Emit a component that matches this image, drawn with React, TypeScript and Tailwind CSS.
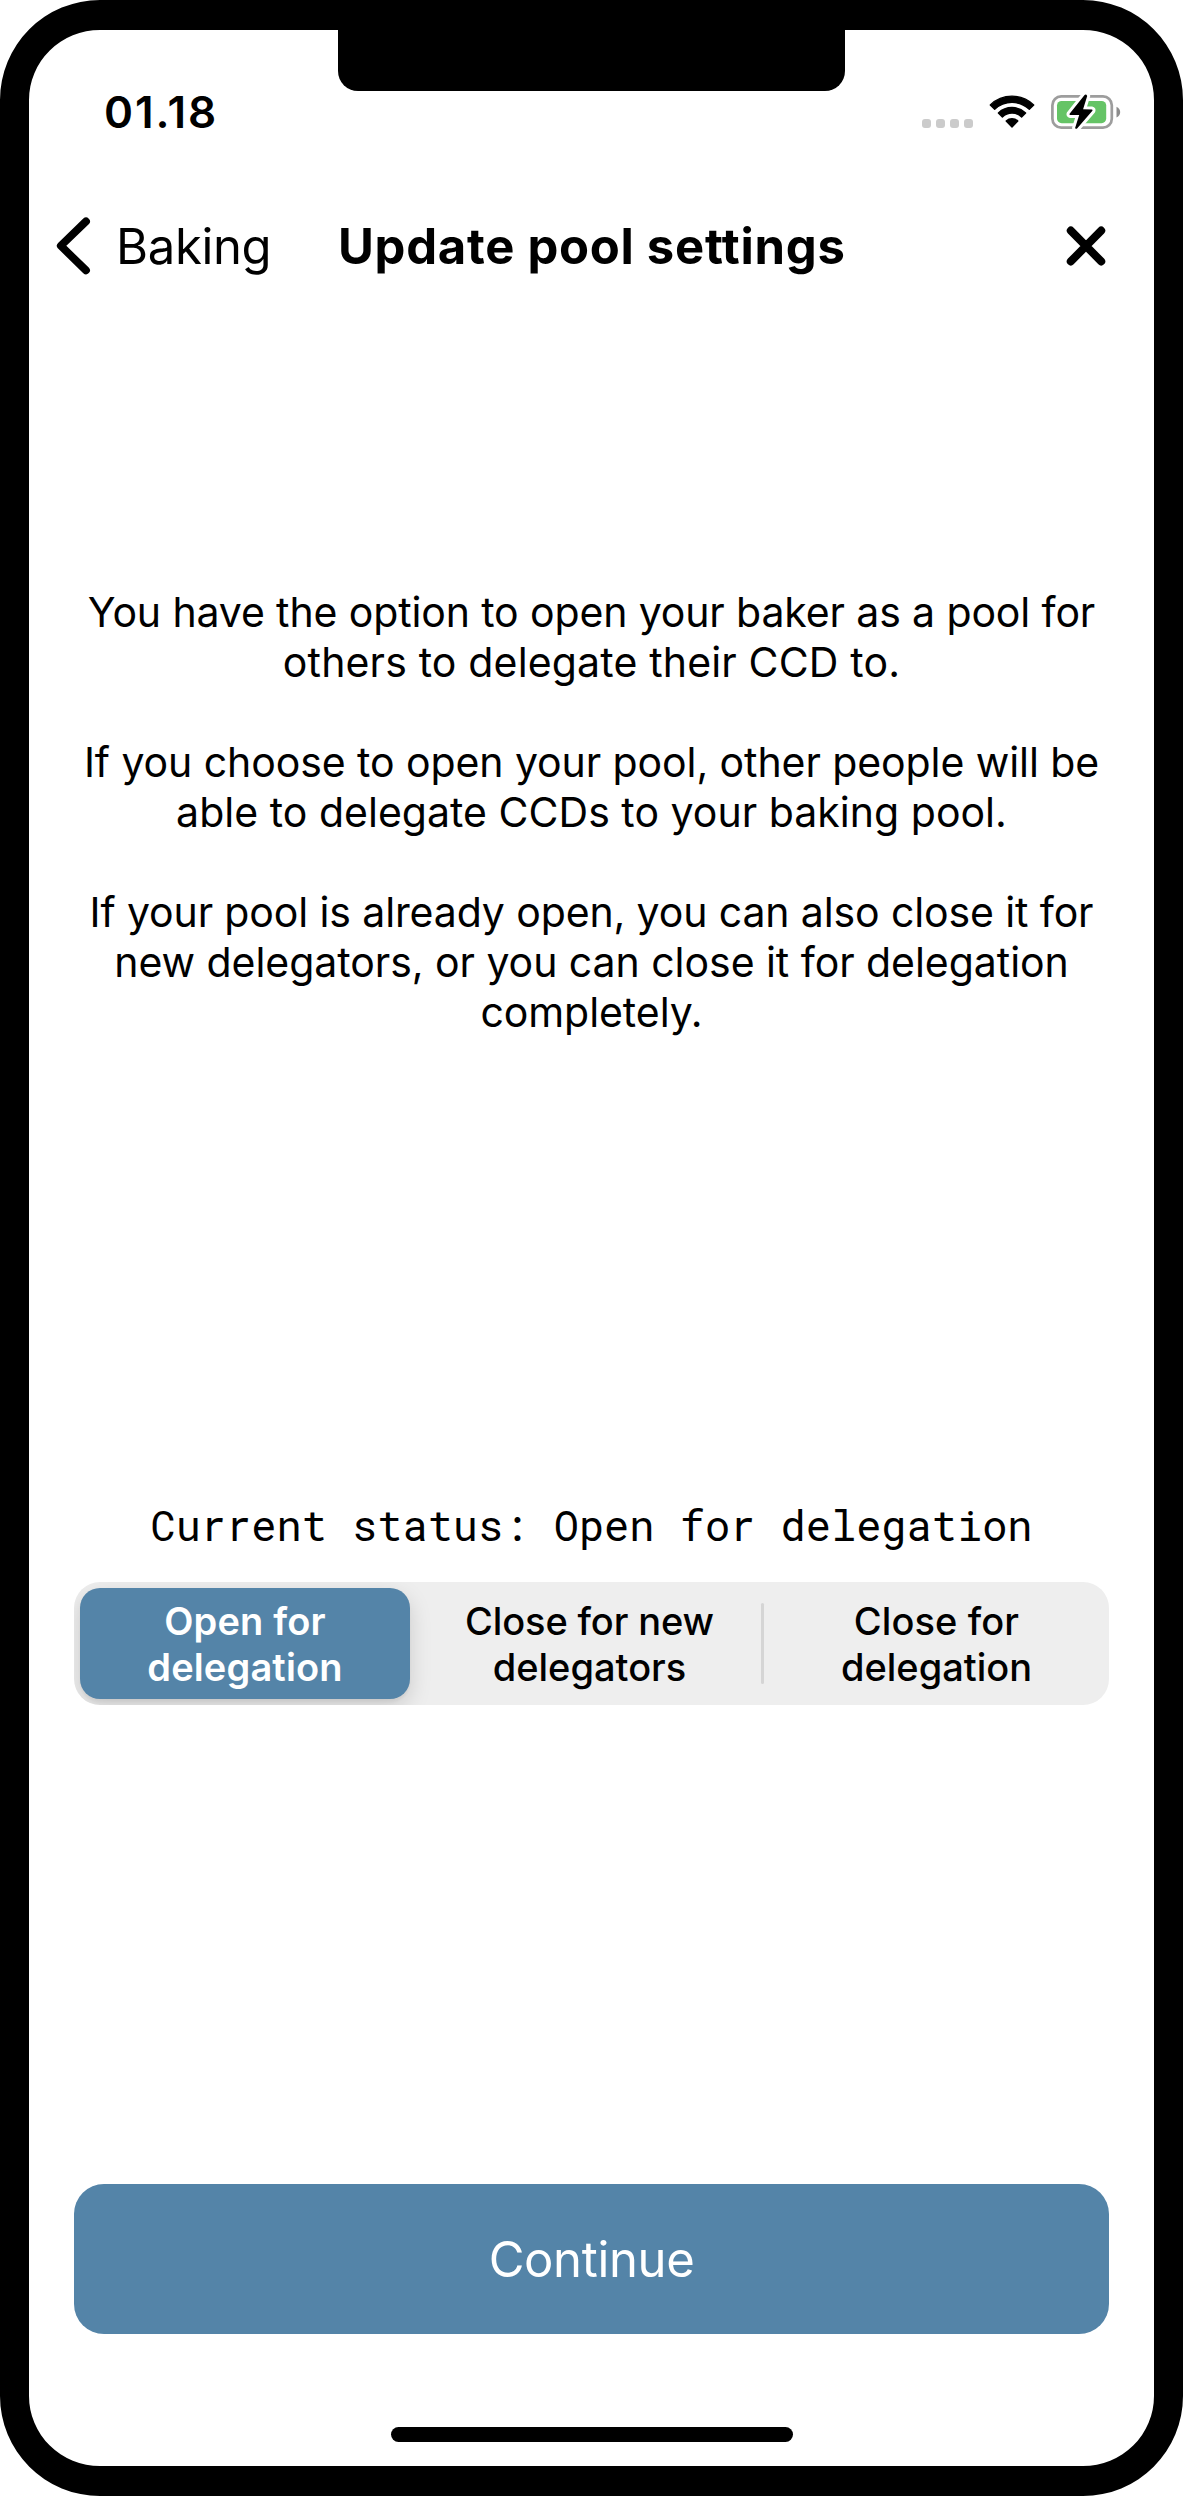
function SignalDots() {
  return (
    <div className="mt-[23px] flex gap-[5px]">
      {[0, 1, 2, 3].map((i) => (
        <span key={i} className="size-[9px] rounded-[3px] bg-[#cbcbcb]" />
      ))}
    </div>
  );
}

function WifiIcon() {
  return (
    <svg width="46" height="34" viewBox="0 0 46 34" className="ml-[16px]">
      <g stroke="#000" strokeWidth="1.4" strokeLinejoin="round">
        <path d="M1.3 9.9A31.3 31.3 0 0 1 44.7 9.9L40.3 14.3A25.2 25.2 0 0 0 5.7 14.3Z" />
        <path d="M9.4 17.9A20 20 0 0 1 36.6 17.9L32.6 21.9A13.8 13.8 0 0 0 13.4 21.9Z" />
        <path d="M17.2 25.9A8.7 8.7 0 0 1 28.8 25.9L23 31.9Z" />
      </g>
    </svg>
  );
}

function BatteryIcon() {
  const bolt =
    "M33.6 1.2L18.6 20.1Q18.2 21.1 19.2 21.2L28.2 21.3L24.1 34.2Q25 35.8 26.3 34.6L41.4 17Q41.8 15.8 40.8 15.7L32.1 15.5L36.2 2.2Q35.2 .2 33.6 1.2Z";
  return (
    <svg width="70" height="38" viewBox="0 0 70 38" className="mt-[2px] ml-[16px]">
      <rect x="1.4" y="2.4" width="59.4" height="31.2" rx="8.8" fill="none" stroke="#9d9d9d" strokeWidth="2.7" />
      <path d="M65.5 12.7C70.4 14.6 70.4 21.6 65.5 23.5Z" fill="#8c8c8c" />
      <rect x="6" y="7" width="49.2" height="22.2" rx="4.6" fill="#65c466" />
      <path d={bolt} transform="translate(0 -0.3)" fill="#fff" stroke="#fff" strokeWidth="6" strokeLinejoin="round" />
      <path d={bolt} transform="translate(0 -0.3)" />
    </svg>
  );
}

function StatusBar() {
  return (
    <div className="mt-[52px] flex h-[60px] items-center justify-between pr-[33px] pl-[75px]">
      <span className="text-[44px] leading-[60px] font-semibold tracking-[1.9px]">01.18</span>
      <div className="flex items-center">
        <SignalDots />
        <WifiIcon />
        <BatteryIcon />
      </div>
    </div>
  );
}

function NavBar() {
  return (
    <div className="mt-[64px] flex h-[80px] items-center">
      <svg width="36" height="60" viewBox="0 0 36 60" className="ml-[27px]">
        <path d="M30 5.4L4.8 29.8L30 54.4" fill="none" stroke="#000" strokeWidth="7.8" strokeLinecap="round" strokeLinejoin="round" />
      </svg>
      <span className="ml-[24px] w-[222px] pt-[2px] text-[49px] leading-[80px] tracking-[-0.35px]">Baking</span>
      <h1 className="pt-[2px] text-[49px] leading-[80px] font-bold tracking-[0.72px] whitespace-nowrap">Update pool settings</h1>
      <svg width="40" height="40" viewBox="0 0 40 40" className="mr-[48px] ml-auto">
        <path d="M4.8 4.6L35.2 35.4M35.2 4.6L4.8 35.4" fill="none" stroke="#000" strokeWidth="8" strokeLinecap="round" />
      </svg>
    </div>
  );
}

function Intro() {
  return (
    <div className="mt-[301px] flex flex-col gap-[50px] text-center text-[41px] leading-[50px] whitespace-nowrap">
      <p>
        <span className="block tracking-[-0.125px]">You have the option to open your baker as a pool for</span>
        <span className="block tracking-[0.16px]">others to delegate their CCD to.</span>
      </p>
      <p>
        <span className="block tracking-[-0.08px]">If you choose to open your pool, other people will be</span>
        <span className="block tracking-[0.025px]">able to delegate CCDs to your baking pool.</span>
      </p>
      <p>
        <span className="block tracking-[-0.12px]">If your pool is already open, you can also close it for</span>
        <span className="block tracking-[-0.045px]">new delegators, or you can close it for delegation</span>
        <span className="block tracking-[-0.065px]">completely.</span>
      </p>
    </div>
  );
}

function SegmentedControl() {
  return (
    <div className="mx-[45px] flex h-[123px] overflow-hidden rounded-[26px] bg-[#eeeeee] p-[6px] text-center text-[38px] leading-[46px] font-medium">
      <button className="flex w-[330px] flex-col justify-center rounded-[20px] bg-[#5484a8] font-semibold text-white shadow-[0_8px_22px_rgba(0,0,0,0.15),0_3px_3px_rgba(0,0,0,0.04)]">
        <span className="block tracking-[0.15px]">Open for</span>
        <span className="block tracking-[0.15px]">delegation</span>
      </button>
      <button className="ml-[4px] flex w-[347px] flex-col justify-center pl-[4px]">
        <span className="block tracking-[-0.12px]">Close for new</span>
        <span className="block">delegators</span>
      </button>
      <span className="h-[81px] w-[3px] self-center rounded-full bg-[#d5d5d5]" />
      <button className="flex flex-1 flex-col justify-center pl-[6px]">
        <span className="block tracking-[0.1px]">Close for</span>
        <span className="block">delegation</span>
      </button>
    </div>
  );
}

export default function App() {
  return (
    <div className="h-[2496px] w-[1183px] bg-white">
      <div className="relative flex h-full flex-col rounded-[100px] border-x-[29px] border-y-[30px] border-black bg-white font-['Inter',sans-serif] text-black">
        <div className="absolute top-[-1px] left-[309px] h-[62px] w-[507px] rounded-b-[20px] bg-black" />
        <StatusBar />
        <NavBar />
        <Intro />
        <p className="mt-[458px] h-[60px] text-center font-['Roboto_Mono',monospace] text-[42px] leading-[60px] whitespace-nowrap">
          Current status: Open for delegation
        </p>
        <div className="mt-[27px]">
          <SegmentedControl />
        </div>
        <button className="mx-[45px] mt-[479px] h-[150px] rounded-[30px] bg-[#5484a8] pt-[2px] text-[49px] leading-[60px] tracking-[-0.35px] text-white">
          Continue
        </button>
        <div className="mt-[93px] h-[15px] w-[402px] self-center rounded-full bg-black" />
      </div>
    </div>
  );
}
